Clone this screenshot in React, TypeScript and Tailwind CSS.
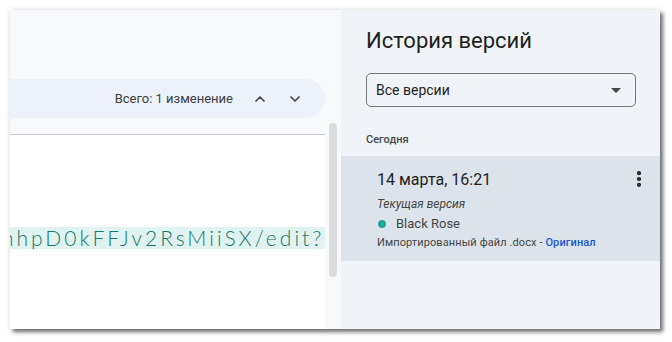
import React from "react";
import { ChevronUp, ChevronDown, EllipsisVertical } from "lucide-react";

const font = { fontFamily: "Roboto, 'Noto Sans', sans-serif" };

export default function App() {
  return (
    <div className="w-[672px] h-[342px] bg-white pt-[10px] pl-[10px]" style={font}>
      <div className="w-[650px] h-[319px] flex overflow-hidden shadow-[3px_3px_4px_rgba(0,0,0,0.55),0_0_6px_rgba(0,0,0,0.12)]">
        {/* Left: document */}
        <div className="w-[331px] h-full bg-[#f8f9fa] flex flex-col">
          <div className="h-[69px]" />
          <div className="w-[315px] h-[39px] bg-[#edf2fa] rounded-r-full flex items-center justify-end pr-[22px]">
            <span className="text-[13px] text-[#3c4043] mr-[19px]">Всего: 1 изменение</span>
            <ChevronUp size={16} strokeWidth={2.5} className="text-[#444746] mr-[19px]" />
            <ChevronDown size={16} strokeWidth={2.5} className="text-[#444746]" />
          </div>
          <div className="flex flex-1">
            <div className="w-[315px] flex flex-col pt-[16px]">
              <div className="flex-1 bg-white border-t border-[#c7c7c7] overflow-hidden">
                <div className="mt-[92px] h-[22px] bg-[#e0f3f1] overflow-hidden">
                  <div
                    className="whitespace-nowrap text-[21px] leading-[22px] text-[#16786b] tracking-[3px] ml-[-8px]"
                    style={{ fontFamily: "Lato, 'Noto Sans', sans-serif", fontWeight: 300 }}
                  >
                    nhpD0kFFJv2RsMiiSX/edit?u
                  </div>
                </div>
              </div>
            </div>
            <div className="w-[16px] flex justify-center pt-[5px]">
              <div className="w-[8px] h-[154px] bg-[#dadce0] rounded-full" />
            </div>
          </div>
        </div>

        {/* Right: version history */}
        <div className="flex-1 h-full bg-[#f0f4f9] flex flex-col">
          <div className="pl-[25px] pr-[24px]">
            <h1 className="text-[22px] leading-[28px] text-[#1f1f1f] mt-[17px]">История версий</h1>
            <div className="mt-[18px] h-[34px] border border-[#747775] rounded-[5px] flex items-center justify-between pl-[9px] pr-[14px]">
              <span className="text-[14px] text-[#1f1f1f]">Все версии</span>
              <span className="w-0 h-0 border-l-[5px] border-r-[5px] border-t-[5px] border-l-transparent border-r-transparent border-t-[#444746]" />
            </div>
            <div className="mt-[26px] text-[11px] leading-[14px] font-medium text-[#444746]">Сегодня</div>
          </div>
          <div className="mt-[9px] h-[105px] bg-[#dde3ea] pl-[36px] pr-[12px] pt-[14px] relative">
            <div className="text-[16px] leading-[20px] text-[#1f1f1f]">14 марта, 16:21</div>
            <EllipsisVertical size={20} strokeWidth={3} className="absolute right-[11px] top-[13px] text-[#1f1f1f]" />
            <div className="mt-[7px] text-[12px] leading-[14px] italic text-[#444746]">Текущая версия</div>
            <div className="mt-[5px] flex items-center h-[16px]">
              <span className="w-[8px] h-[8px] rounded-full bg-[#26a69a] ml-[1px] mr-[10px]" />
              <span className="text-[13px] text-[#444746]">Black Rose</span>
            </div>
            <div className="mt-[4px] text-[11px] leading-[14px] text-[#444746] tracking-[0.1px]">
              Импортированный файл .docx - <span className="text-[#1a56d6] font-medium">Оригинал</span>
            </div>
          </div>
        </div>
      </div>
    </div>
  );
}
